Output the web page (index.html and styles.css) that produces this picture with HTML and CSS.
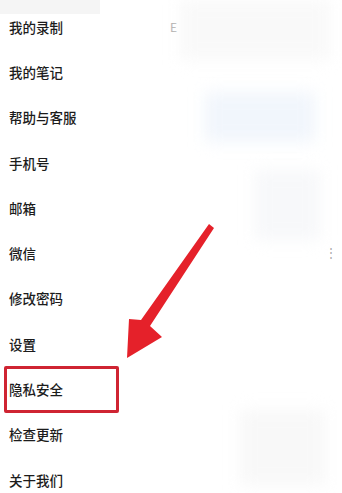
FILE: index.html
```html
<!DOCTYPE html>
<html lang="zh-CN">
<head>
    <meta charset="UTF-8">
    <meta name="viewport" content="width=device-width, initial-scale=1.0">
    <title>我的</title>
    <link rel="stylesheet" href="styles.css">
</head>
<body>

<div class="topBar"></div>

<ul class="menu">
    <li class="menuItem">我的录制</li>
    <li class="menuItem">我的笔记</li>
    <li class="menuItem">帮助与客服</li>
    <li class="menuItem">手机号</li>
    <li class="menuItem">邮箱</li>
    <li class="menuItem">微信</li>
    <li class="menuItem">修改密码</li>
    <li class="menuItem">设置</li>
    <li class="menuItem marked">隐私安全</li>
    <li class="menuItem">检查更新</li>
    <li class="menuItem">关于我们</li>
</ul>

<!-- размытая часть справа -->
<span class="ghostText">E</span>
<div class="blob blobTop"></div>
<div class="blob blobBlue"></div>
<div class="blob blobMid"></div>
<div class="blob blobBottom"></div>
<span class="dots">⋮</span>

<!-- стрелка -->
<svg class="arrow" width="342" height="493" viewBox="0 0 342 493">
    <polygon points="209,224 214,228 150,326 162,337 127,358 129,319 141,320" fill="#e5212a"/>
</svg>

</body>
</html>
```

FILE: styles.css
```css
body {
    margin: 0;
    background-color: #fff;
    font-family: "Noto Sans CJK SC", "Noto Sans", sans-serif;
    color: #1c1c1c;
    overflow: hidden;
    height: 493px;
    position: relative;
}
.topBar {
    position: absolute;
    left: 0;
    top: 0;
    width: 100px;
    height: 14px;
    background-color: #f5f5f5;
}
.menu {
    list-style: none;
    margin: 0;
    padding: 4px 0 0 0;
    display: flex;
    flex-direction: column;
}
.menuItem {
    height: 45.3px;
    display: flex;
    align-items: center;
    padding-left: 9px;
    font-size: 13.5px;
    font-weight: 500;
    position: relative;
}
.marked::after {
    content: "";
    position: absolute;
    left: 4px;
    top: 0;
    width: 109px;
    height: 41px;
    border: 3px solid #cf2432;
    border-radius: 2px;
}
.ghostText {
    position: absolute;
    left: 170px;
    top: 18px;
    font-size: 12px;
    color: #aaa;
}
.blob {
    position: absolute;
    filter: blur(8px);
}
.blobTop {
    left: 180px;
    top: 0;
    width: 150px;
    height: 60px;
    background-color: #f9f9f9;
}
.blobBlue {
    left: 205px;
    top: 92px;
    width: 110px;
    height: 50px;
    background-color: #f1f6fc;
}
.blobMid {
    left: 255px;
    top: 170px;
    width: 65px;
    height: 70px;
    background-color: #f7f8fa;
}
.blobBottom {
    left: 240px;
    top: 410px;
    width: 85px;
    height: 75px;
    background-color: #f8f8f8;
}
.dots {
    position: absolute;
    left: 325px;
    top: 243px;
    font-size: 12px;
    color: #aaa;
}
.arrow {
    position: absolute;
    left: 0;
    top: 0;
}
```
